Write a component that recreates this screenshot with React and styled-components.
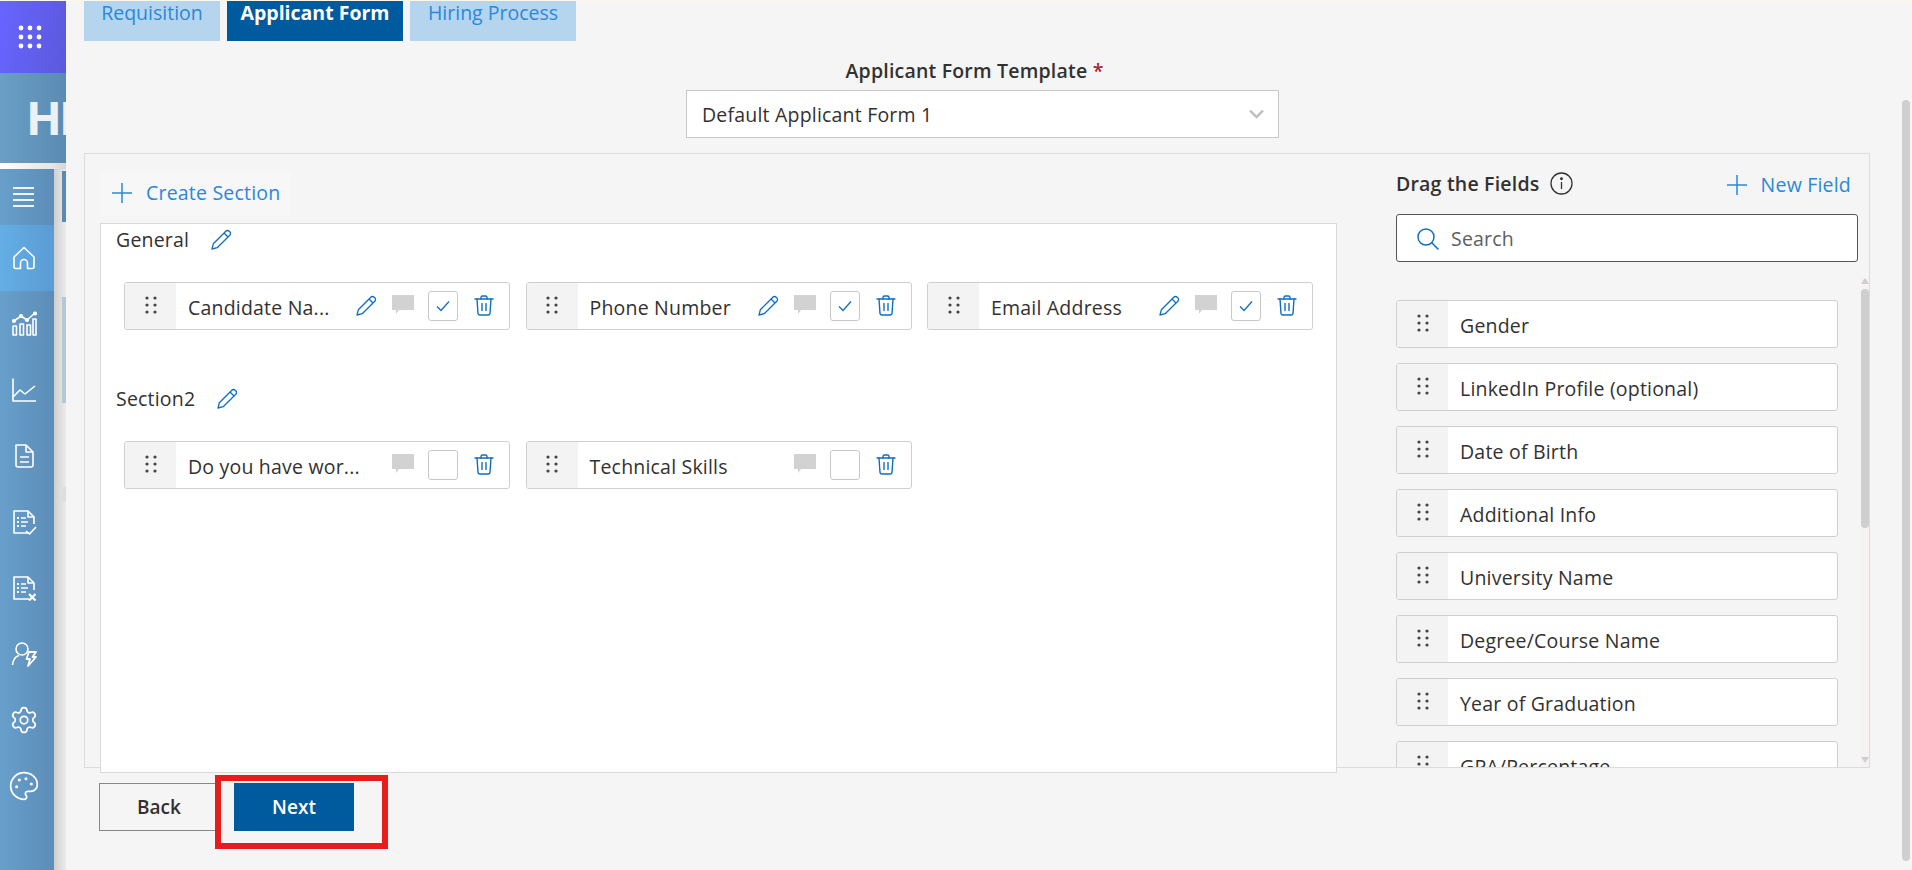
import React from 'react'
import styled, { createGlobalStyle } from 'styled-components'
import { Palette, Settings } from 'lucide-react'

const FONT = '"Open Sans", "Noto Sans", "Liberation Sans", sans-serif'

const GlobalStyle = createGlobalStyle`
  html, body {
    margin: 0;
    padding: 0;
    height: 100%;
    overflow: hidden;
    background: #f5f5f5;
    font-family: ${FONT};
  }
  * {
    box-sizing: border-box;
  }
`

const selectedFields = [
  { name: 'Candidate Na...', editable: true, checked: true },
  { name: 'Phone Number', editable: true, checked: true },
  { name: 'Email Address', editable: true, checked: true },
]

const otherFields = [
  { name: 'Do you have wor...' },
  { name: 'Technical Skills' },
]

const availableFields = [
  'Gender',
  'LinkedIn Profile (optional)',
  'Date of Birth',
  'Additional Info',
  'University Name',
  'Degree/Course Name',
  'Year of Graduation',
  'GPA/Percentage',
]

const DragDots = () => (
  <svg width="12" height="18" viewBox="0 0 12 18" fill="#444">
    <circle cx="2" cy="2" r="1.6" />
    <circle cx="10" cy="2" r="1.6" />
    <circle cx="2" cy="9" r="1.6" />
    <circle cx="10" cy="9" r="1.6" />
    <circle cx="2" cy="16" r="1.6" />
    <circle cx="10" cy="16" r="1.6" />
  </svg>
)

const PencilIcon = () => (
  <svg width="21" height="21" viewBox="0 0 21 21" fill="none" stroke="#106ebe" strokeWidth="1.3" strokeLinejoin="round">
    <path d="M1 20l1.3-5.2L14.8 2.2a2.4 2.4 0 0 1 3.4 0l.6.6a2.4 2.4 0 0 1 0 3.4L6.2 18.7z" />
    <path d="M13 4l4 4" />
  </svg>
)

const CommentIcon = () => (
  <svg width="22" height="20" viewBox="0 0 22 20" fill="#d2d2d2">
    <path d="M0 0h22v15H7l-3 4v-4H0z" />
  </svg>
)

const TrashIcon = () => (
  <svg width="20" height="21" viewBox="0 0 20 21" fill="none" stroke="#106ebe" strokeWidth="1.4" strokeLinecap="round" strokeLinejoin="round">
    <path d="M1 4h18" />
    <path d="M7 4V2.5A1.5 1.5 0 0 1 8.500 1h3A1.500 1.500 0 0 1 13 2.500V4" />
    <path d="M3 4l1 14.500A2 2 0 0 0 6 20h8a2 2 0 0 0 2-1.500L17 4" />
    <path d="M8 8.500v7M12 8.500v7" />
  </svg>
)

const CheckIcon = () => (
  <svg width="14" height="12" viewBox="0 0 14 12" fill="none" stroke="#106ebe" strokeWidth="1.3">
    <path d="M1 6.500l4 4L13 1.500" />
  </svg>
)

const PlusIcon = () => (
  <svg width="20" height="20" viewBox="0 0 20 20" stroke="#2b88d8" strokeWidth="1.500">
    <path d="M10 0v20M0 10h20" />
  </svg>
)

const InfoIcon = () => (
  <svg width="23" height="23" viewBox="0 0 23 23" fill="none" stroke="#333" strokeWidth="1.300">
    <circle cx="11.500" cy="11.500" r="10.500" />
    <path d="M11.500 10v7" />
    <circle cx="11.500" cy="6.800" r="0.800" fill="#333" />
  </svg>
)

const SearchIcon = () => (
  <svg width="22" height="22" viewBox="0 0 22 22" fill="none" stroke="#106ebe" strokeWidth="1.500">
    <circle cx="9" cy="9" r="8" />
    <path d="M14.800 14.800L21.500 21.500" />
  </svg>
)

const ChevronIcon = () => (
  <svg width="15" height="10" viewBox="0 0 15 10" fill="none" stroke="#bdbdbd" strokeWidth="2.400">
    <path d="M1 1.500l6.500 6.500 6.500-6.500" />
  </svg>
)

const AppsIcon = () => (
  <svg width="24" height="24" viewBox="0 0 24 24" fill="#fff">
    {[3, 12, 21].map((y) =>
      [3, 12, 21].map((x) => <circle key={`${x}-${y}`} cx={x} cy={y} r="2.400" />),
    )}
  </svg>
)

const navIconProps = {
  width: 26,
  height: 26,
  viewBox: '0 0 26 26',
  fill: 'none',
  stroke: '#fff',
  strokeWidth: 1.6,
  strokeLinejoin: 'round',
}

const HomeIcon = () => (
  <svg {...navIconProps}>
    <path d="M3 12L13 2.500 23 12v10a1.500 1.500 0 0 1-1.500 1.500H16.500V18a3.500 3.500 0 0 0-7 0v5.500H4.500A1.500 1.500 0 0 1 3 22z" />
  </svg>
)

const BarsIcon = () => (
  <svg {...navIconProps}>
    <path d="M2 15h3.500v9H2zM9 13h3.500v11H9zM16 14h3.500v10H16zM22 8h3v16h-3z" />
    <path d="M3 10l7-5 6 4 8-7" />
    <circle cx="3" cy="10" r="1.300" fill="#fff" />
    <circle cx="10" cy="5" r="1.300" fill="#fff" />
    <circle cx="16" cy="9" r="1.300" fill="#fff" />
    <circle cx="24" cy="2.500" r="1.300" fill="#fff" />
  </svg>
)

const LineChartIcon = () => (
  <svg {...navIconProps}>
    <path d="M2 1.500V24h23" />
    <path d="M2 20l7-7 5 4 10-8" />
  </svg>
)

const DocIcon = () => (
  <svg {...navIconProps}>
    <path d="M5 2h10l7 7v13a2 2 0 0 1-2 2H7a2 2 0 0 1-2-2z" />
    <path d="M15 2v7h7M9 14h9M9 19h9" />
  </svg>
)

const ListDocIcon = ({ mark }) => (
  <svg {...navIconProps}>
    <path d="M18 24H3V2h14l6 6v7" />
    <path d="M17 2v6h6" />
    <path d="M10 9h5M10 13h7M10 17h5" />
    <path d="M6 9h2M6 13h2M6 17h2" strokeWidth="2.200" />
    {mark === 'check' && <path d="M15 22l3.500 3L25 18" />}
    {mark === 'cross' && <path d="M18 19l6.500 6.500M24.500 19L18 25.500" strokeWidth="2.200" />}
  </svg>
)

const PersonBoltIcon = () => (
  <svg {...navIconProps}>
    <circle cx="11" cy="8" r="6" />
    <path d="M1.500 24c.5-5 3-8.500 6.500-9.500" />
    <path d="M18 11h7l-3.500 5H25l-8 9 2-7h-3.500z" strokeWidth="1.800" />
  </svg>
)

const Page = styled.div`
  display: flex;
  height: 100vh;
  overflow: hidden;
  border-top: 1px solid #fdf7ea;
`

const Rail = styled.aside`
  width: 66px;
  flex: none;
  display: flex;
  flex-direction: column;
  overflow: hidden;
  margin-top: -1px;
`

const AppTile = styled.div`
  height: 73px;
  flex: none;
  display: flex;
  align-items: center;
  padding-left: 18px;
  background: linear-gradient(100deg, #6765ff, #5b59dc);
`

const Brand = styled.div`
  height: 90px;
  flex: none;
  padding-left: 26px;
  font-size: 47px;
  font-weight: 700;
  line-height: 88px;
  letter-spacing: -3px;
  color: #eef1f4;
  white-space: nowrap;
  background: linear-gradient(90deg, #6b9fc6, #5a8bb3);
`

const RailShade = styled.div`
  height: 6px;
  flex: none;
  background: linear-gradient(90deg, #ffffff, #e4e4e4 80%, #d6d6d6);
`

const RailBody = styled.div`
  flex: 1;
  display: flex;
  min-height: 0;
`

const Nav = styled.nav`
  width: 54px;
  flex: none;
  display: flex;
  flex-direction: column;
  background: linear-gradient(90deg, #689fcb, #5c8db8);
`

const NavItem = styled.div`
  height: ${(p) => (p.$menu ? 56 : 66)}px;
  flex: none;
  display: flex;
  align-items: center;
  justify-content: center;
  padding-right: 7px;
  background: ${(p) => (p.$active ? 'linear-gradient(90deg, #64aee6, #5a9cd3)' : 'transparent')};
`

const MenuLines = styled.div`
  width: 21px;
  height: 20px;
  display: flex;
  flex-direction: column;
  justify-content: space-between;

  span {
    height: 2px;
    background: #eef3f7;
  }
`

const Gutter = styled.div`
  flex: 1;
  display: flex;
  flex-direction: column;
  padding: 2px 0 0 8px;
  background: linear-gradient(90deg, #cfcfcf, #ebebeb);
`

const GutterPiece = styled.div`
  height: ${(p) => p.$height}px;
  margin-bottom: ${(p) => p.$gap}px;
  background: ${(p) => p.$color};
`

const Main = styled.main`
  flex: 1;
  min-width: 0;
  display: flex;
  background: #f5f5f5;
`

const Content = styled.div`
  flex: 1;
  min-width: 0;
  display: flex;
  flex-direction: column;
  padding: 0 0 0 18px;
`

const PageScroll = styled.div`
  width: 8px;
  flex: none;
  margin: 99px 2px 0 32px;
  height: 761px;
  border-radius: 4px;
  background: #cfcfcf;
`

const Tabs = styled.div`
  display: flex;
  gap: 7px;
  height: 40px;
  flex: none;
`

const Tab = styled.div`
  width: ${(p) => p.$width}px;
  height: 40px;
  text-align: center;
  font-size: 19.5px;
  line-height: 24px;
  font-weight: ${(p) => (p.$active ? 700 : 400)};
  color: ${(p) => (p.$active ? '#ffffff' : '#2b88d8')};
  background: ${(p) => (p.$active ? '#005a9e' : '#b5d5ef')};
`

const TemplateBlock = styled.div`
  display: flex;
  flex-direction: column;
  align-items: center;
  margin: 16px 0 15px;
  padding-left: 11px;
`

const TemplateLabel = styled.label`
  height: 33px;
  padding-top: 1px;
  margin-right: 16px;
  font-size: 19.5px;
  font-weight: 600;
  line-height: 26px;
  letter-spacing: 0.2px;
  color: #323130;

  b {
    color: #a4262c;
    font-weight: 600;
  }
`

const TemplateSelect = styled.div`
  width: 593px;
  height: 48px;
  display: flex;
  align-items: center;
  justify-content: space-between;
  padding: 0 14px 0 15px;
  font-size: 19.5px;
  letter-spacing: 0.2px;
  color: #323130;
  background: #fff;
  border: 1px solid #c8c8c8;
`

const Panel = styled.section`
  height: 615px;
  flex: none;
  display: flex;
  border: 1px solid #dcdcdc;
`

const Builder = styled.div`
  width: 1252px;
  flex: none;
  display: flex;
  flex-direction: column;
  padding: 17px 0 0 15px;
`

const CreateButton = styled.div`
  width: 191px;
  height: 45px;
  flex: none;
  display: flex;
  align-items: center;
  gap: 14px;
  padding: 0 0 2px 12px;
  font-size: 19.5px;
  letter-spacing: 0.2px;
  white-space: nowrap;
  color: #2b88d8;
  background: #f7f7f7;
`

const Canvas = styled.div`
  height: 550px;
  flex: none;
  margin-top: 7px;
  padding: 0 0 0 15px;
  background: #fff;
  border: 1px solid #d9d9d9;
`

const SectionTitle = styled.div`
  display: flex;
  align-items: center;
  gap: 22px;
  height: 30px;
  font-size: 19.5px;
  letter-spacing: 0.2px;
  color: #323130;
`

const FieldGrid = styled.div`
  display: flex;
  gap: 15.5px;
  margin: 28px 0 ${(p) => p.$bottom}px 8px;
`

const FieldRow = styled.div`
  width: ${(p) => p.$width}px;
  height: 48px;
  flex: none;
  display: flex;
  align-items: center;
  background: #fff;
  border: 1px solid #cfcfcf;
  border-radius: 3px;
  overflow: hidden;
`

const Handle = styled.div`
  width: 51px;
  height: 100%;
  flex: none;
  display: flex;
  align-items: center;
  justify-content: center;
  padding-bottom: 3px;
  background: #f3f3f3;
`

const FieldName = styled.span`
  flex: 1;
  min-width: 0;
  padding: 2px 0 0 12px;
  font-size: 19.5px;
  letter-spacing: 0.2px;
  color: #323130;
  white-space: nowrap;
`

const Actions = styled.div`
  flex: none;
  display: flex;
  align-items: center;
  gap: 15px;
  padding-right: 15px;
`

const IconSlot = styled.span`
  display: flex;
  align-items: center;
  padding-bottom: 2px;
`

const CheckBox = styled.span`
  width: 30px;
  height: 30px;
  margin: 0 1px 0 -1px;
  display: flex;
  align-items: center;
  justify-content: center;
  background: #fff;
  border: 1px solid #c8c8c8;
  border-radius: 3px;
`

const Library = styled.div`
  flex: 1;
  min-width: 0;
  display: flex;
  flex-direction: column;
  padding: 14px 0 0 59px;
`

const LibraryHead = styled.div`
  height: 30px;
  width: 455px;
  flex: none;
  display: flex;
  align-items: center;
`

const LibraryTitle = styled.div`
  display: flex;
  align-items: center;
  gap: 11px;
  font-size: 19.5px;
  font-weight: 600;
  letter-spacing: 0.2px;
  color: #323130;
`

const NewField = styled.div`
  margin-left: auto;
  display: flex;
  align-items: center;
  gap: 14px;
  padding-top: 3px;
  font-size: 19.5px;
  letter-spacing: 0.2px;
  color: #2b88d8;
`

const SearchBox = styled.div`
  width: 462px;
  height: 48px;
  flex: none;
  margin-top: 16px;
  display: flex;
  align-items: center;
  gap: 12px;
  padding: 1px 0 0 20px;
  font-size: 19.5px;
  letter-spacing: 0.2px;
  color: #605e5c;
  background: #fff;
  border: 1px solid #555;
  border-radius: 3px;
`

const ListArea = styled.div`
  flex: 1;
  min-height: 0;
  display: flex;
  overflow: hidden;
`

const FieldList = styled.div`
  width: 442px;
  flex: none;
  display: flex;
  flex-direction: column;
  gap: 15px;
  padding-top: 38px;
`

const ListScroll = styled.div`
  width: 8px;
  flex: none;
  margin: 16px 0 0 23px;
  display: flex;
  flex-direction: column;
  align-items: center;
  background: #f6f2f2;
`

const ScrollArrow = styled.span`
  width: 0;
  height: 0;
  flex: none;
  margin: 0 0 5px;
  border-left: 4px solid transparent;
  border-right: 4px solid transparent;
  border-${(p) => (p.$down ? 'top' : 'bottom')}: 6px solid #cfcfcf;
  ${(p) => p.$down && 'margin: auto 0 4px;'}
`

const ListThumb = styled.span`
  width: 8px;
  height: 239px;
  flex: none;
  border-radius: 4px;
  background: #cfcfcf;
`

const Footer = styled.div`
  display: flex;
  gap: 15px;
  margin: 15px 0 0 15px;
`

const Button = styled.button`
  width: 120px;
  height: 48px;
  padding: 0;
  font-family: ${FONT};
  font-size: 19px;
  font-weight: 600;
  color: ${(p) => (p.$primary ? '#fff' : '#323130')};
  background: ${(p) => (p.$primary ? '#005a9e' : 'transparent')};
  border: ${(p) => (p.$primary ? 'none' : '1px solid #8a8886')};
`

const Highlight = styled.div`
  position: relative;

  &::after {
    content: '';
    position: absolute;
    left: -19px;
    top: -8px;
    width: 173px;
    height: 74px;
    box-sizing: border-box;
    border: 6px solid #e81c1c;
    pointer-events: none;
  }
`

const Field = ({ field }) => (
  <FieldRow $width={386}>
    <Handle>
      <DragDots />
    </Handle>
    <FieldName>{field.name}</FieldName>
    <Actions>
      {field.editable && (
        <IconSlot>
          <PencilIcon />
        </IconSlot>
      )}
      <IconSlot>
        <CommentIcon />
      </IconSlot>
      <CheckBox>{field.checked && <CheckIcon />}</CheckBox>
      <IconSlot>
        <TrashIcon />
      </IconSlot>
    </Actions>
  </FieldRow>
)

const App = () => {
  return (
    <>
      <GlobalStyle />
      <Page>
        <Rail>
          <AppTile>
            <AppsIcon />
          </AppTile>
          <Brand>HR</Brand>
          <RailShade />
          <RailBody>
            <Nav>
              <NavItem $menu>
                <MenuLines>
                  <span />
                  <span />
                  <span />
                  <span />
                </MenuLines>
              </NavItem>
              <NavItem $active>
                <HomeIcon />
              </NavItem>
              <NavItem>
                <BarsIcon />
              </NavItem>
              <NavItem>
                <LineChartIcon />
              </NavItem>
              <NavItem>
                <DocIcon />
              </NavItem>
              <NavItem>
                <ListDocIcon mark="check" />
              </NavItem>
              <NavItem>
                <ListDocIcon mark="cross" />
              </NavItem>
              <NavItem>
                <PersonBoltIcon />
              </NavItem>
              <NavItem>
                <Settings size={30} color="#fff" strokeWidth={1.4} />
              </NavItem>
              <NavItem>
                <Palette size={32} color="#fff" strokeWidth={1.3} />
              </NavItem>
            </Nav>
            <Gutter>
              <GutterPiece $height={51} $gap={75} $color="#5c8ab2" />
              <GutterPiece $height={106} $gap={84} $color="#b5c8d8" />
              <GutterPiece $height={15} $gap={0} $color="#dedede" />
            </Gutter>
          </RailBody>
        </Rail>
        <Main>
          <Content>
            <Tabs>
              <Tab $width={136}>Requisition</Tab>
              <Tab $width={176} $active>
                Applicant Form
              </Tab>
              <Tab $width={166}>Hiring Process</Tab>
            </Tabs>
            <TemplateBlock>
              <TemplateLabel>
                Applicant Form Template <b>*</b>
              </TemplateLabel>
              <TemplateSelect>
                Default Applicant Form 1
                <ChevronIcon />
              </TemplateSelect>
            </TemplateBlock>
            <Panel>
              <Builder>
                <CreateButton>
                  <PlusIcon />
                  Create Section
                </CreateButton>
                <Canvas>
                  <SectionTitle>
                    General
                    <PencilIcon />
                  </SectionTitle>
                  <FieldGrid $bottom={53}>
                    {selectedFields.map((field) => (
                      <Field key={field.name} field={field} />
                    ))}
                  </FieldGrid>
                  <SectionTitle>
                    Section2
                    <PencilIcon />
                  </SectionTitle>
                  <FieldGrid $bottom={0}>
                    {otherFields.map((field) => (
                      <Field key={field.name} field={field} />
                    ))}
                  </FieldGrid>
                </Canvas>
              </Builder>
              <Library>
                <LibraryHead>
                  <LibraryTitle>
                    Drag the Fields
                    <InfoIcon />
                  </LibraryTitle>
                  <NewField>
                    <PlusIcon />
                    New Field
                  </NewField>
                </LibraryHead>
                <SearchBox>
                  <SearchIcon />
                  Search
                </SearchBox>
                <ListArea>
                  <FieldList>
                    {availableFields.map((name) => (
                      <FieldRow key={name} $width={442}>
                        <Handle>
                          <DragDots />
                        </Handle>
                        <FieldName>{name}</FieldName>
                      </FieldRow>
                    ))}
                  </FieldList>
                  <ListScroll>
                    <ScrollArrow />
                    <ListThumb />
                    <ScrollArrow $down />
                  </ListScroll>
                </ListArea>
              </Library>
            </Panel>
            <Footer>
              <Button>Back</Button>
              <Highlight>
                <Button $primary>Next</Button>
              </Highlight>
            </Footer>
          </Content>
          <PageScroll />
        </Main>
      </Page>
    </>
  )
}

export default App
